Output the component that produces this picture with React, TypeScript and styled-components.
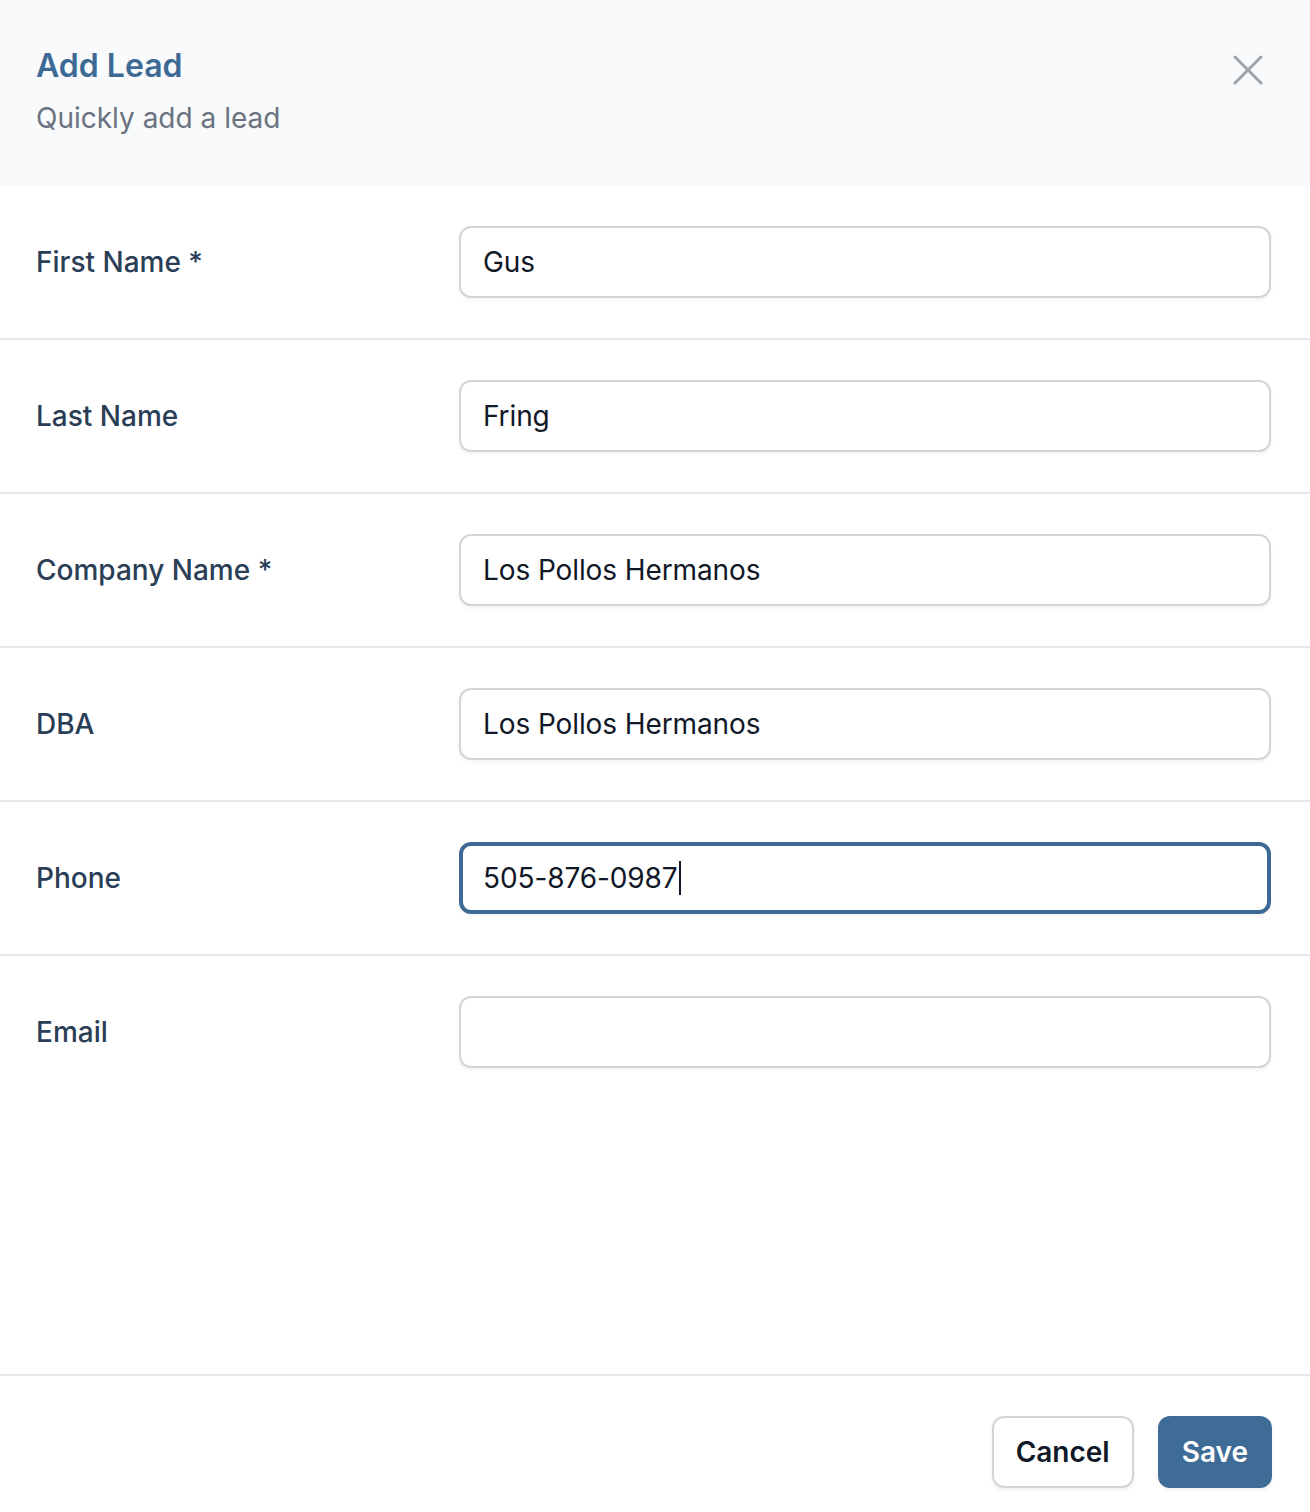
import React from "react";
import styled, { createGlobalStyle } from "styled-components";

const GlobalStyle = createGlobalStyle`
  * { box-sizing: border-box; }
  html, body { margin: 0; padding: 0; background: #ffffff; }
  body {
    font-family: Inter, "Noto Sans", "Liberation Sans", sans-serif;
    -webkit-font-smoothing: antialiased;
  }
`;

const Panel = styled.div`
  display: flex;
  flex-direction: column;
  width: 1310px;
  height: 1512px;
  background: #ffffff;
  overflow: hidden;
`;

const Header = styled.div`
  display: flex;
  justify-content: space-between;
  align-items: flex-start;
  background: #f9fafb;
  padding: 42px 38px 48px 36px;
`;

const TitleBlock = styled.div`
  display: flex;
  flex-direction: column;
  gap: 8px;
`;

const Title = styled.h2`
  margin: 0;
  font-size: 32px;
  line-height: 48px;
  font-weight: 600;
  color: #3d6a95;
`;

const Subtitle = styled.p`
  margin: 0;
  font-size: 28px;
  line-height: 40px;
  color: #6b7280;
`;

const CloseButton = styled.button`
  display: flex;
  align-items: center;
  justify-content: center;
  width: 48px;
  height: 48px;
  margin-top: 4px;
  padding: 0;
  border: none;
  background: transparent;
  color: #9ca3af;
  cursor: pointer;
`;

const Body = styled.div`
  flex: 1;
  display: flex;
  flex-direction: column;
`;

const Row = styled.div<{ $last?: boolean }>`
  display: grid;
  grid-template-columns: 423px 1fr;
  align-items: center;
  padding: 40px 39px 40px 36px;
  border-bottom: ${(p) => (p.$last ? "none" : "2px solid #e5e7eb")};
`;

const Label = styled.label`
  font-size: 28px;
  line-height: 40px;
  font-weight: 500;
  color: #2a3e56;
`;

const InputBox = styled.div<{ $focused?: boolean }>`
  display: flex;
  align-items: center;
  height: 72px;
  padding: 0 ${(p) => (p.$focused ? "20px" : "22px")};
  border: ${(p) => (p.$focused ? "4px solid #3d6a95" : "2px solid #d1d5db")};
  border-radius: 12px;
  box-shadow: 0 2px 4px rgba(0, 0, 0, 0.05);
  font-size: 28px;
  letter-spacing: -0.1px;
  color: #111827;
  background: #ffffff;
`;

const Caret = styled.span`
  display: inline-block;
  width: 2px;
  height: 34px;
  margin-left: 1px;
  background: #111827;
`;

const Footer = styled.div`
  display: flex;
  justify-content: flex-end;
  gap: 24px;
  padding: 40px 38px 24px;
  border-top: 2px solid #e5e7eb;
`;

const Button = styled.button<{ $primary?: boolean }>`
  height: 72px;
  padding: 0 ${(p) => (p.$primary ? "24px" : "22px")};
  border-radius: 12px;
  font-family: inherit;
  font-size: 28px;
  font-weight: 600;
  cursor: pointer;
  border: ${(p) => (p.$primary ? "none" : "2px solid #d1d5db")};
  background: ${(p) => (p.$primary ? "#3e6c96" : "#ffffff")};
  color: ${(p) => (p.$primary ? "#ffffff" : "#111827")};
  box-shadow: 0 2px 4px rgba(0, 0, 0, 0.06);
`;

const fields = [
  { label: "First Name *", value: "Gus" },
  { label: "Last Name", value: "Fring" },
  { label: "Company Name *", value: "Los Pollos Hermanos" },
  { label: "DBA", value: "Los Pollos Hermanos" },
  { label: "Phone", value: "505-876-0987", focused: true },
  { label: "Email", value: "" },
];

export default function App() {
  return (
    <>
      <GlobalStyle />
      <Panel>
        <Header>
          <TitleBlock>
            <Title>Add Lead</Title>
            <Subtitle>Quickly add a lead</Subtitle>
          </TitleBlock>
          <CloseButton aria-label="Close">
            <svg width="48" height="48" viewBox="0 0 24 24" fill="none" stroke="currentColor" strokeWidth="1.5" strokeLinecap="round">
              <path d="M5.5 18.5L18.5 5.5M5.5 5.5l13 13" />
            </svg>
          </CloseButton>
        </Header>
        <Body>
          {fields.map((f, i) => (
            <Row key={f.label} $last={i === fields.length - 1}>
              <Label>{f.label}</Label>
              <InputBox $focused={f.focused}>
                {f.value}
                {f.focused && <Caret />}
              </InputBox>
            </Row>
          ))}
        </Body>
        <Footer>
          <Button>Cancel</Button>
          <Button $primary>Save</Button>
        </Footer>
      </Panel>
    </>
  );
}
